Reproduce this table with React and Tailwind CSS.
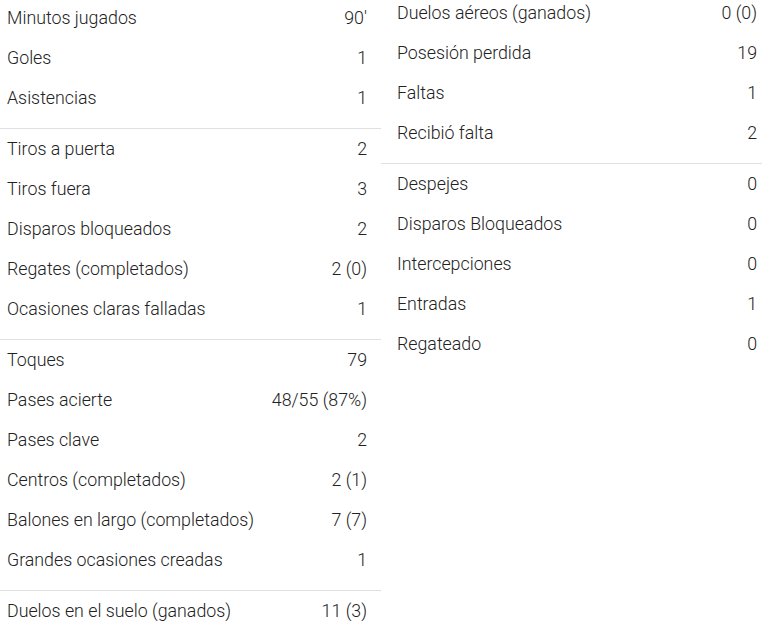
const left = [
  [
    ["Minutos jugados", "90'"],
    ["Goles", "1"],
    ["Asistencias", "1"],
  ],
  [
    ["Tiros a puerta", "2"],
    ["Tiros fuera", "3"],
    ["Disparos bloqueados", "2"],
    ["Regates (completados)", "2 (0)"],
    ["Ocasiones claras falladas", "1"],
  ],
  [
    ["Toques", "79"],
    ["Pases acierte", "48/55 (87%)"],
    ["Pases clave", "2"],
    ["Centros (completados)", "2 (1)"],
    ["Balones en largo (completados)", "7 (7)"],
    ["Grandes ocasiones creadas", "1"],
  ],
  [["Duelos en el suelo (ganados)", "11 (3)"]],
];

const right = [
  [
    ["Duelos aéreos (ganados)", "0 (0)"],
    ["Posesión perdida", "19"],
    ["Faltas", "1"],
    ["Recibió falta", "2"],
  ],
  [
    ["Despejes", "0"],
    ["Disparos Bloqueados", "0"],
    ["Intercepciones", "0"],
    ["Entradas", "1"],
    ["Regateado", "0"],
  ],
];

function StatColumn({ groups, className, rowClass }) {
  return (
    <div className={className}>
      {groups.map((group, gi) => (
        <div key={gi} className={gi > 0 ? "border-t border-[#e0e0e0] pb-[10px]" : "pb-[10px]"}>
          {group.map(([label, value]) => (
            <div key={label} className={`flex h-10 items-center justify-between pt-[1px] ${rowClass}`}>
              <span>{label}</span>
              <span>{value}</span>
            </div>
          ))}
        </div>
      ))}
    </div>
  );
}

export default function App() {
  return (
    <div className="flex h-[625px] w-[762px] items-start overflow-hidden bg-white font-['Roboto',sans-serif] text-[17.8px] font-light text-[#222]">
      <StatColumn groups={left} className="-mt-[2px] w-[381px] shrink-0" rowClass="pl-[7px] pr-[14px]" />
      <StatColumn groups={right} className="-mt-[7px] flex-1" rowClass="pl-[16px] pr-[5px]" />
    </div>
  );
}
